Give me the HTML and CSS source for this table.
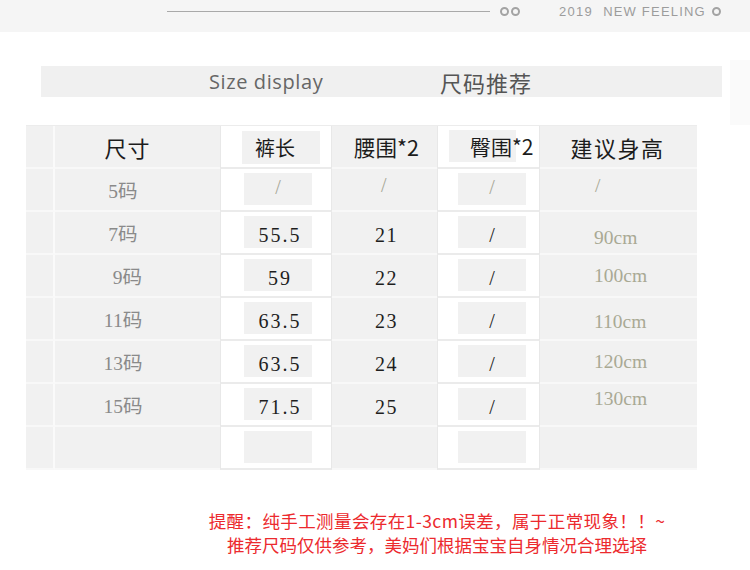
FILE: index.html
```html
<!DOCTYPE html>
<html lang="zh-CN">
<head>
<meta charset="utf-8">
<title>Size display</title>
<link rel="stylesheet" href="styles.css">
</head>
<body>
<header class="band">
  <span class="rule"></span>
  <span class="rings"><i class="ring"></i><i class="ring"></i></span>
  <span class="tag">2019</span>
  <span class="tag tag-wide">NEW FEELING</span>
  <i class="ring ring-end"></i>
</header>

<section class="title-row">
  <div class="title-bar">
    <span class="title-en">Size display</span>
    <span class="title-cn">尺码推荐</span>
  </div>
  <div class="ghost"></div>
</section>

<section class="table">
  <div class="c gutter"></div>
  <div class="c gray head h-size">尺寸</div>
  <div class="c white hbox-l"><span class="box head-box">裤长</span></div>
  <div class="c gray head h-waist">腰围*2</div>
  <div class="c white hbox-r"><span class="box head-box hip">臀围*2</span></div>
  <div class="c gray head h-tall">建议身高</div>

  <div class="c gutter"></div>
  <div class="c gray size">5码</div>
  <div class="c white box-l"><span class="box slash-lt">/</span></div>
  <div class="c gray num slash-lt up">/</div>
  <div class="c white box-r"><span class="box slash-lt">/</span></div>
  <div class="c gray tall slash-lt up">/</div>

  <div class="c gutter"></div>
  <div class="c gray size">7码</div>
  <div class="c white box-l"><span class="box num">55.5</span></div>
  <div class="c gray num dn">21</div>
  <div class="c white box-r"><span class="box slash">/</span></div>
  <div class="c gray tall low">90cm</div>

  <div class="c gutter"></div>
  <div class="c gray size s9">9码</div>
  <div class="c white box-l"><span class="box num">59</span></div>
  <div class="c gray num dn">22</div>
  <div class="c white box-r"><span class="box slash">/</span></div>
  <div class="c gray tall">100cm</div>

  <div class="c gutter"></div>
  <div class="c gray size">11码</div>
  <div class="c white box-l"><span class="box num">63.5</span></div>
  <div class="c gray num dn">23</div>
  <div class="c white box-r"><span class="box slash">/</span></div>
  <div class="c gray tall low-s">110cm</div>

  <div class="c gutter"></div>
  <div class="c gray size">13码</div>
  <div class="c white box-l"><span class="box num">63.5</span></div>
  <div class="c gray num dn">24</div>
  <div class="c white box-r"><span class="box slash">/</span></div>
  <div class="c gray tall">120cm</div>

  <div class="c gutter"></div>
  <div class="c gray size">15码</div>
  <div class="c white box-l"><span class="box num">71.5</span></div>
  <div class="c gray num dn">25</div>
  <div class="c white box-r"><span class="box slash">/</span></div>
  <div class="c gray tall high">130cm</div>

  <div class="c gutter"></div>
  <div class="c gray"></div>
  <div class="c white box-l"><span class="box"></span></div>
  <div class="c gray"></div>
  <div class="c white box-r"><span class="box"></span></div>
  <div class="c gray"></div>
</section>

<footer class="note">
  <p class="note-1">提醒：纯手工测量会存在1-3cm误差，属于正常现象！！~</p>
  <p>推荐尺码仅供参考，美妈们根据宝宝自身情况合理选择</p>
</footer>
</body>
</html>
```

FILE: styles.css
```css
html, body {
  margin: 0;
  padding: 0;
  background: #fff;
}
body {
  width: 750px;
  height: 570px;
  overflow: hidden;
  font-family: "Noto Sans CJK SC", "Noto Sans", sans-serif;
}

/* top band */
.band {
  height: 32px;
  background: #f5f5f5;
  display: flex;
  align-items: flex-start;
  padding-left: 167px;
  box-sizing: border-box;
}
.rule {
  width: 323px;
  height: 1px;
  background: #a9a9a9;
  margin-top: 11px;
}
.rings {
  display: flex;
  gap: 2px;
  margin-left: 10px;
  margin-top: 7px;
}
.ring {
  display: block;
  width: 9px;
  height: 9px;
  border: 2px solid #a3a3a3;
  border-radius: 50%;
  box-sizing: border-box;
}
.tag {
  font-family: "Liberation Sans", Arial, sans-serif;
  font-size: 13px;
  line-height: 13px;
  color: #9c9c9c;
  letter-spacing: 1.3px;
  margin-top: 5px;
  margin-left: 39px;
}
.tag-wide {
  margin-left: 10px;
  letter-spacing: 1.2px;
}
.ring-end {
  margin-left: 6px;
  margin-top: 7px;
}

/* title */
.title-row {
  display: flex;
  align-items: flex-start;
  height: 31px;
  margin-top: 34px;
  padding-left: 41px;
}
.title-bar {
  width: 681px;
  height: 31px;
  background: #f0f0f0;
  display: flex;
  align-items: center;
  padding-left: 168px;
  box-sizing: border-box;
}
.title-en {
  font-family: "Open Sans", "Noto Sans", sans-serif;
  font-size: 20px;
  color: #666;
  letter-spacing: 0.6px;
  width: 231px;
}
.title-cn {
  font-size: 22px;
  color: #555;
  letter-spacing: 1px;
}
.ghost {
  flex: none;
  width: 20px;
  height: 65px;
  margin-left: 8px;
  margin-top: -6px;
  background: #fafafa;
}

/* table */
.table {
  display: grid;
  grid-template-columns: 29px 165px 112px 105px 103px 157px;
  grid-auto-rows: 43px;
  margin-top: 28px;
  margin-left: 26px;
  width: 671px;
  border-top: 1px solid #ececec;
}
.c {
  box-sizing: border-box;
  display: flex;
  align-items: center;
  border-bottom: 2px solid #f8f8f8;
}
.gray {
  background: #f1f1f1;
}
.white {
  background: #fff;
  border-bottom-color: #ebebeb;
  border-left: 1px solid #e8e8e8;
  border-right: 1px solid #e8e8e8;
}
.gutter {
  background: #f1f1f1;
  border-right: 2px solid #fafafa;
}

.head {
  justify-content: center;
  font-size: 21px;
  color: #1c1c1c;
}
.h-size {
  padding-right: 20px;
  font-size: 22px;
  letter-spacing: 1px;
}
.h-waist {
  padding-left: 4px;
  font-size: 21.5px;
}
.h-tall {
  font-size: 22px;
  padding-right: 2px;
  letter-spacing: 1.5px;
}

.box {
  display: flex;
  align-items: center;
  justify-content: center;
  background: #f1f1f1;
  white-space: nowrap;
}
.hbox-l {
  padding-left: 21px;
}
.hbox-l .box {
  width: 78px;
  height: 33px;
  margin-top: 1px;
  justify-content: flex-start;
  padding-left: 13px;
  box-sizing: border-box;
}
.hbox-r {
  padding-left: 11px;
}
.hbox-r .box {
  width: 67px;
  height: 32px;
  margin-top: -2px;
  justify-content: flex-start;
  padding-left: 21px;
  box-sizing: border-box;
  font-size: 21px;
}
.head-box {
  font-size: 20px;
  color: #1c1c1c;
}
.box-l,
.box-r {
  align-items: flex-start;
  padding-top: 4px;
}
.box-l {
  padding-left: 23px;
}
.box-r {
  padding-left: 20px;
}
.box-l .box,
.box-r .box {
  width: 68px;
  height: 32px;
}

.size {
  justify-content: center;
  padding-right: 29px;
  font-family: "Liberation Serif", "Noto Sans CJK SC", serif;
  font-size: 19.5px;
  color: #8a8a8a;
}
.s9 {
  padding-right: 20px;
}
.num {
  justify-content: center;
  font-family: "Liberation Serif", serif;
  font-size: 20px;
  color: #1e1e1e;
  letter-spacing: 1.5px;
}
.num.dn {
  padding-top: 5px;
  padding-left: 4px;
}
.box.num {
  padding-top: 6px;
  padding-left: 4px;
  box-sizing: border-box;
  letter-spacing: 2px;
}
.slash {
  font-family: "Liberation Serif", serif;
  font-size: 20px;
  color: #222;
  padding-top: 6px;
  box-sizing: border-box;
}
.slash-lt {
  font-family: "Liberation Serif", serif;
  font-size: 20px;
  color: #a8a898;
  font-weight: 300;
}
.box.slash-lt {
  padding-bottom: 4px;
  box-sizing: border-box;
}
.up {
  padding-bottom: 8px;
}
.tall {
  padding-left: 54px;
  font-family: "Liberation Serif", serif;
  font-size: 19.5px;
  color: #a9a994;
}
.tall.slash-lt {
  padding-left: 55px;
}
.low {
  padding-top: 10px;
}
.low-s {
  padding-top: 6px;
}
.high {
  padding-bottom: 12px;
}

/* footer */
.note {
  margin-top: 39px;
  padding-left: 124px;
  text-align: center;
  color: #ec2a2e;
  font-size: 17.5px;
  line-height: 24px;
}
.note p {
  margin: 0;
}
.note-1 {
  letter-spacing: 0.4px;
}
```
